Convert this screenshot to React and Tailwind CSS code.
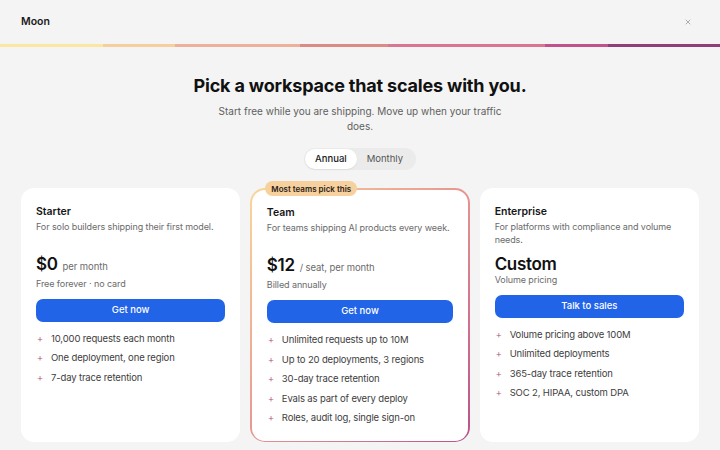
import { X } from "lucide-react";

const plans = [
    {
        name: "Starter",
        desc: "For solo builders shipping their first model.",
        price: "$0",
        unit: "per month",
        note: "Free forever · no card",
        cta: "Get now",
        features: ["10,000 requests each month", "One deployment, one region", "7-day trace retention"],
    },
    {
        name: "Team",
        desc: "For teams shipping AI products every week.",
        price: "$12",
        unit: "/ seat, per month",
        note: "Billed annually",
        cta: "Get now",
        featured: true,
        features: [
            "Unlimited requests up to 10M",
            "Up to 20 deployments, 3 regions",
            "30-day trace retention",
            "Evals as part of every deploy",
            "Roles, audit log, single sign-on",
        ],
    },
    {
        name: "Enterprise",
        desc: "For platforms with compliance and volume needs.",
        price: "Custom",
        note: "Volume pricing",
        cta: "Talk to sales",
        features: ["Volume pricing above 100M", "Unlimited deployments", "365-day trace retention", "SOC 2, HIPAA, custom DPA"],
    },
];

const stripes = [
    ["w-[103px]", "bg-[#fbe6a2]"],
    ["w-[72px]", "bg-[#f5cf9e]"],
    ["w-[125px]", "bg-[#edb09b]"],
    ["w-[88px]", "bg-[#dc8a86]"],
    ["w-[157px]", "bg-[#d77791]"],
    ["w-[63px]", "bg-[#bf528a]"],
    ["flex-1", "bg-[#8e3f7a]"],
];

function PlanBody({ plan }) {
    return (
        <div className="flex h-full flex-col rounded-[13px] bg-white px-[15px] pt-[15.5px] pb-4">
            <h3 className="text-[10.5px] font-semibold leading-[15px] text-[#161616]">{plan.name}</h3>
            <p className="mt-[1px] min-h-[32px] text-[9px] leading-[13px] tracking-[-0.01em] text-[#6b6b6b]">{plan.desc}</p>
            <div className="flex items-baseline gap-[5px]">
                <span className="text-[17px] font-semibold leading-[24px] tracking-[-0.02em] text-[#111]">{plan.price}</span>
                {plan.unit && <span className="text-[9.5px] tracking-[-0.01em] text-[#6b6b6b]">{plan.unit}</span>}
            </div>
            <p className={`${plan.unit ? "mt-[1px]" : "-mt-[3px]"} text-[9px] leading-[13px] tracking-[-0.01em] text-[#6b6b6b]`}>
                {plan.note}
            </p>
            <button className="mt-[9px] h-[23px] w-full shrink-0 rounded-[7px] bg-[#2264e8] text-[9.5px] font-medium text-white">
                {plan.cta}
            </button>
            <ul className="mt-[10px] flex flex-col gap-[6px]">
                {plan.features.map((f) => (
                    <li key={f} className="flex items-center gap-[7px] text-[9.5px] leading-[13.5px] tracking-[-0.015em] text-[#3d3d3d]">
                        <span className="w-[8px] text-center text-[10px] font-light text-[#b04a72]">+</span>
                        {f}
                    </li>
                ))}
            </ul>
        </div>
    );
}

export default function App() {
    return (
        <div className="h-[450px] w-[720px] overflow-hidden bg-[#f4f4f4] font-['Inter',sans-serif]">
            <header className="flex h-[44px] items-center justify-between pl-[21px] pr-[28px]">
                <span className="text-[10.5px] font-semibold text-[#1a1a1a]">Moon</span>
                <X className="h-[8px] w-[8px] text-[#8a8a8a]" strokeWidth={2} />
            </header>
            <div className="flex h-[3px]">
                {stripes.map(([w, c], i) => (
                    <div key={i} className={`${w} ${c}`} />
                ))}
            </div>

            <div className="mt-[27px] flex flex-col items-center">
                <h1 className="text-[18px] font-bold leading-[24px] tracking-[-0.01em] text-[#111]">
                    Pick a workspace that scales with you.
                </h1>
                <p className="mt-[6px] w-[300px] text-center text-[10px] leading-[15px] text-[#5f5f5f]">
                    Start free while you are shipping. Move up when your traffic does.
                </p>
                <div className="mt-[14px] flex h-[22px] items-center rounded-full bg-[#ebebeb] p-[1px] pr-[3px]">
                    <span className="flex h-[20px] items-center rounded-full bg-white px-[10px] text-[9.5px] font-medium text-[#1a1a1a] shadow-[0_1px_2px_rgba(0,0,0,0.06)]">
                        Annual
                    </span>
                    <span className="px-[10px] text-[9.5px] text-[#555]">Monthly</span>
                </div>
            </div>

            <div className="mt-[18px] grid h-[252px] grid-cols-3 gap-[10px] px-[21px]">
                {plans.map((plan) =>
                    plan.featured ? (
                        <div
                            key={plan.name}
                            className="relative rounded-[15px] bg-linear-to-br from-[#f8d79a] via-[#e79491] to-[#b9508a] p-[1.5px]"
                        >
                            <span className="absolute -top-[7px] left-[15px] flex h-[15px] items-center rounded-full bg-[#f6d09d] px-[6px] text-[8px] font-semibold text-[#2a2118]">
                                Most teams pick this
                            </span>
                            <PlanBody plan={plan} />
                        </div>
                    ) : (
                        <div key={plan.name} className="rounded-[15px]">
                            <PlanBody plan={plan} />
                        </div>
                    )
                )}
            </div>
        </div>
    );
}
